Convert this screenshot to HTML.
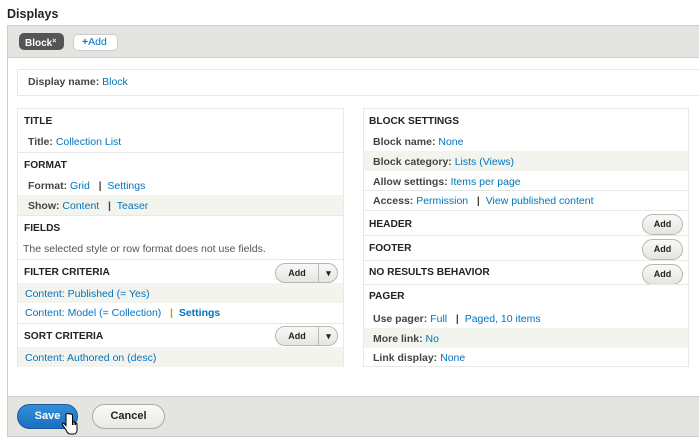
<!DOCTYPE html>
<html><head><meta charset="utf-8"><style>
*{box-sizing:border-box;margin:0;padding:0}
body{width:699px;height:446px;background:#fff;font-family:"Liberation Sans",Arial,sans-serif;font-size:10.5px;color:#333;position:relative;overflow:hidden}
.a{position:absolute}
.h{position:absolute;font-weight:bold;font-size:10.2px;color:#222}
.r{position:absolute;height:20px;line-height:22px;padding-left:8px;font-size:10.5px;white-space:nowrap}
.r b{color:#444}
.l,.r b.l{color:#0074bd}
.g{background:#f3f4ee}
.sep{border-top:1px solid #e8e8e8}
.btn{position:absolute;border:1px solid #b8b8b0;border-radius:12px;background:linear-gradient(#f8f8f6,#e6e6e0);font-weight:bold;font-size:9px;text-align:center;color:#222}
</style></head><body>
<div class="a" style="left:7px;top:7px;font-weight:bold;font-size:12.5px;color:#222">Displays</div>
<div class="a" style="left:7px;top:25px;width:700px;height:412px;border:1px solid #ccc;background:#fff"></div>
<div class="a" style="left:8px;top:26px;width:700px;height:32px;background:#e4e4e0;border-bottom:1px solid #ccc"></div>
<div class="a" style="left:19px;top:33px;width:45px;height:17px;border-radius:5px;background:#555;color:#fff;font-weight:bold;font-size:10px;line-height:17px;padding-left:6px;white-space:nowrap">Block<span style="font-size:7px;vertical-align:3px">×</span></div>
<div class="a" style="left:73px;top:34px;width:45px;height:17px;border-radius:5px;background:#fff;border:1px solid #ccc;color:#0074bd;font-size:10.5px;line-height:15px;padding-left:8px"><b>+</b>Add</div>
<div class="a" style="left:17px;top:69px;width:690px;height:27px;border:1px solid #e8e8e8"></div>
<div class="r" style="left:20px;top:71px"><b>Display name:</b> <span class="l">Block</span></div>

<div class="a" style="left:17px;top:108px;width:327px;height:259px;border:1px solid #e8e8e8"></div>
<div class="h" style="left:24px;top:116px">TITLE</div>
<div class="r" style="left:20px;top:131px"><b>Title:</b> <span class="l">Collection List</span></div>
<div class="a sep" style="left:18px;top:152px;width:325px"></div>
<div class="h" style="left:24px;top:160px">FORMAT</div>
<div class="r" style="left:20px;top:175px"><b>Format:</b> <span class="l">Grid</span> &nbsp; <b>|</b> &nbsp;<span class="l">Settings</span></div>
<div class="r g" style="left:18px;top:195px;width:325px;padding-left:10px"><b>Show:</b> <span class="l">Content</span> &nbsp; <b>|</b> &nbsp;<span class="l">Teaser</span></div>
<div class="a sep" style="left:18px;top:215px;width:325px"></div>
<div class="h" style="left:24px;top:223px">FIELDS</div>
<div class="r" style="left:15px;top:238px;color:#555">The selected style or row format does not use fields.</div>
<div class="a sep" style="left:18px;top:259px;width:325px"></div>
<div class="h" style="left:24px;top:267px">FILTER CRITERIA</div>
<div class="btn" style="left:275px;top:263px;width:63px;height:20px;line-height:18px"><span style="position:absolute;left:0;width:42px">Add</span><span style="position:absolute;left:42px;top:0;height:18px;border-left:1px solid #bbb;width:20px">▾</span></div>
<div class="r g l" style="left:18px;top:283px;width:325px;padding-left:7px">Content: Published (= Yes)</div>
<div class="r" style="left:18px;top:302px;padding-left:7px"><span class="l">Content: Model (= Collection)</span> &nbsp; <b style="color:#c90">|</b> &nbsp;<b class="l">Settings</b></div>
<div class="a sep" style="left:18px;top:323px;width:325px"></div>
<div class="h" style="left:24px;top:331px">SORT CRITERIA</div>
<div class="btn" style="left:275px;top:326px;width:63px;height:20px;line-height:18px"><span style="position:absolute;left:0;width:42px">Add</span><span style="position:absolute;left:42px;top:0;height:18px;border-left:1px solid #bbb;width:20px">▾</span></div>
<div class="r g l" style="left:18px;top:347px;width:325px;padding-left:7px">Content: Authored on (desc)</div>

<div class="a" style="left:363px;top:108px;width:326px;height:259px;border:1px solid #e8e8e8"></div>
<div class="h" style="left:369px;top:116px">BLOCK SETTINGS</div>
<div class="r" style="left:365px;top:131px"><b>Block name:</b> <span class="l">None</span></div>
<div class="r g" style="left:364px;top:151px;width:324px;padding-left:9px"><b>Block category:</b> <span class="l">Lists (Views)</span></div>
<div class="r" style="left:365px;top:171px"><b>Allow settings:</b> <span class="l">Items per page</span></div>
<div class="a sep" style="left:364px;top:190px;width:324px"></div>
<div class="r" style="left:365px;top:190px"><b>Access:</b> <span class="l">Permission</span> &nbsp; <b>|</b> &nbsp;<span class="l">View published content</span></div>
<div class="a sep" style="left:364px;top:210px;width:324px"></div>
<div class="h" style="left:369px;top:219px">HEADER</div>
<div class="btn" style="left:642px;top:214px;width:41px;height:21px;line-height:19px">Add</div>
<div class="a sep" style="left:364px;top:235px;width:324px"></div>
<div class="h" style="left:369px;top:243px">FOOTER</div>
<div class="btn" style="left:642px;top:239px;width:41px;height:21px;line-height:19px">Add</div>
<div class="a sep" style="left:364px;top:260px;width:324px"></div>
<div class="h" style="left:369px;top:267px">NO RESULTS BEHAVIOR</div>
<div class="btn" style="left:642px;top:264px;width:41px;height:21px;line-height:19px">Add</div>
<div class="a sep" style="left:364px;top:284px;width:324px"></div>
<div class="h" style="left:369px;top:291px">PAGER</div>
<div class="r" style="left:365px;top:308px"><b>Use pager:</b> <span class="l">Full</span> &nbsp; <b>|</b> &nbsp;<span class="l">Paged, 10 items</span></div>
<div class="r g" style="left:364px;top:328px;width:324px;padding-left:9px"><b>More link:</b> <span class="l">No</span></div>
<div class="r" style="left:365px;top:347px"><b>Link display:</b> <span class="l">None</span></div>

<div class="a" style="left:8px;top:396px;width:700px;height:40px;background:#e4e4e0;border-top:1px solid #ccc"></div>
<div class="a" style="left:17px;top:404px;width:61px;height:25px;border-radius:13px;background:linear-gradient(#3590d8,#1a6fc0);border:1px solid #1a5a9c;color:#fff;font-weight:bold;font-size:11px;text-align:center;line-height:23px">Save</div>
<div class="a" style="left:92px;top:404px;width:73px;height:25px;border-radius:13px;background:linear-gradient(#fafaf8,#e8e8e4);border:1px solid #aaa;color:#222;font-weight:bold;font-size:11px;text-align:center;line-height:23px">Cancel</div>
<svg class="a" style="left:61px;top:413px" width="18" height="24" viewBox="0 0 18 24"><path d="M5 1.5v11l-2-2c-1-1-2.5 0-1.5 1.2L5 17c1 2 2 4 4 4h4c2 0 3-2 3-4v-6c0-1-1.5-1-1.5 0v1-2c0-1-1.5-1-1.5 0v2-3c0-1-1.5-1-1.5 0v3V1.5C7 0.3 5 0.3 5 1.5z" fill="#fff" stroke="#000" stroke-width="1"/></svg>
</body></html>
